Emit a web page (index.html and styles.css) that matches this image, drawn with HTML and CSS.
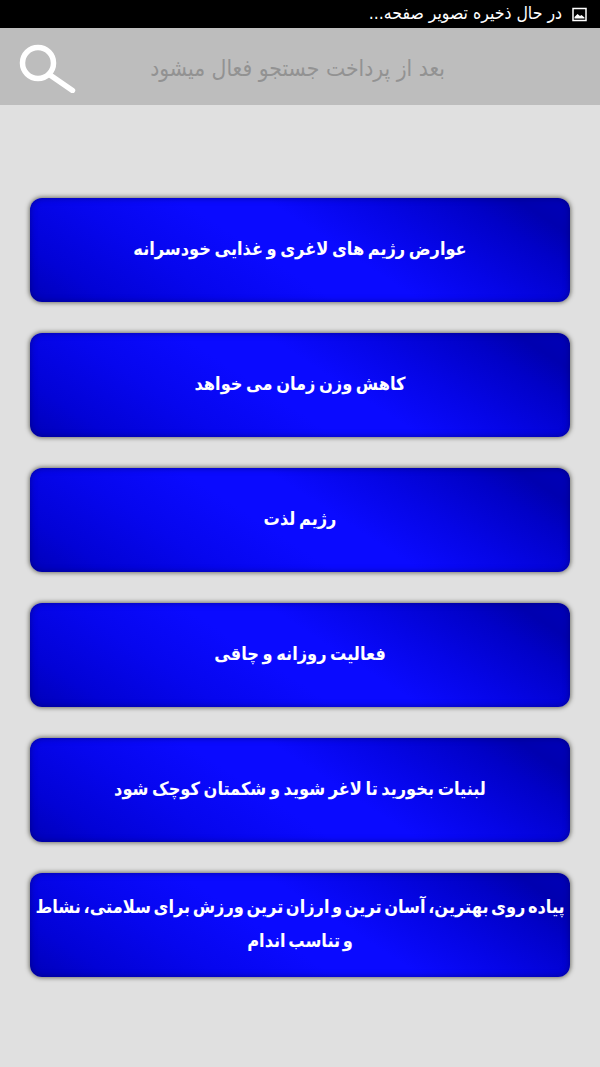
FILE: index.html
```html
<!DOCTYPE html>
<html lang="fa" dir="rtl">
<head>
<meta charset="utf-8">
<title>رژیم</title>
<link rel="stylesheet" href="styles.css">
</head>
<body>
<div class="status">
  <svg class="status-icon" viewBox="0 0 15 15" aria-hidden="true"><rect x="1" y="1.500" width="13" height="12" fill="none" stroke="#fff" stroke-width="1.500"/><path d="M2.500 11.500 V10 L5.500 7 L8 9 L9.500 8 L12.500 10.500 V11.500 Z" fill="#fff"/></svg>
  <span class="status-text">در حال ذخیره تصویر صفحه...</span>
</div>
<header class="search">
  <div class="hint">بعد از پرداخت جستجو فعال میشود</div>
  <svg class="search-icon" viewBox="0 0 58 50" aria-hidden="true"><circle cx="20" cy="20" r="15.500" fill="none" stroke="#fff" stroke-width="5.500"/><path d="M32 32 L54.500 47.500" fill="none" stroke="#fff" stroke-width="5.500" stroke-linecap="round"/></svg>
</header>
<main class="list">
  <a class="item">عوارض رژیم های لاغری و غذایی خودسرانه</a>
  <a class="item">کاهش وزن زمان می خواهد</a>
  <a class="item">رژیم لذت</a>
  <a class="item">فعالیت روزانه و چاقی</a>
  <a class="item">لبنیات بخورید تا لاغر شوید و شکمتان کوچک شود</a>
  <a class="item item-long"><span>پیاده روی بهترین، آسان ترین و ارزان ترین ورزش برای سلامتی، نشاط<br>و تناسب اندام</span></a>
</main>
</body>
</html>
```
FILE: styles.css
```css
html, body { margin: 0; padding: 0; }
body {
  width: 600px;
  height: 1067px;
  overflow: hidden;
  background: #e0e0e0;
  font-family: "DejaVu Sans Condensed", "DejaVu Sans", sans-serif;
}
.status {
  height: 28px;
  background: #000;
  color: #fff;
  display: flex;
  align-items: center;
  gap: 10px;
  padding-right: 13px;
  box-sizing: border-box;
}
.status-icon { width: 15px; height: 15px; flex: none; }
.status-text { font-size: 17.500px; line-height: 26px; padding-bottom: 2px; }
.search {
  height: 77px;
  background: #bdbdbd;
  display: flex;
  align-items: center;
  justify-content: space-between;
  padding: 3px 155px 0 18px;
  box-sizing: border-box;
}
.hint { font-size: 22.700px; color: #929292; white-space: nowrap; }
.search-icon { width: 58px; height: 50px; flex: none; }
.list {
  display: flex;
  flex-direction: column;
  gap: 31px;
  padding: 93px 30px 0;
}
.item {
  height: 104px;
  box-sizing: border-box;
  display: flex;
  align-items: center;
  justify-content: center;
  text-align: center;
  color: #fff;
  font-size: 18px;
  font-weight: bold;
  word-spacing: -2px;
  line-height: 34px;
  padding-bottom: 2px;
  border-radius: 12px;
  background: linear-gradient(33deg, #0000b8 0%, #0202d6 12%, #0606ee 28%, #0a0aff 44%, #0a0aff 56%, #0505e6 70%, #0101c8 84%, #0000b0 92%, #0000b8 100%);
  box-shadow: 0 0 4px 1px rgba(70, 70, 60, 0.7), inset 0 0 6px rgba(0, 0, 90, 0.55);
}
.item-long { word-spacing: -3px; white-space: nowrap; }
```
